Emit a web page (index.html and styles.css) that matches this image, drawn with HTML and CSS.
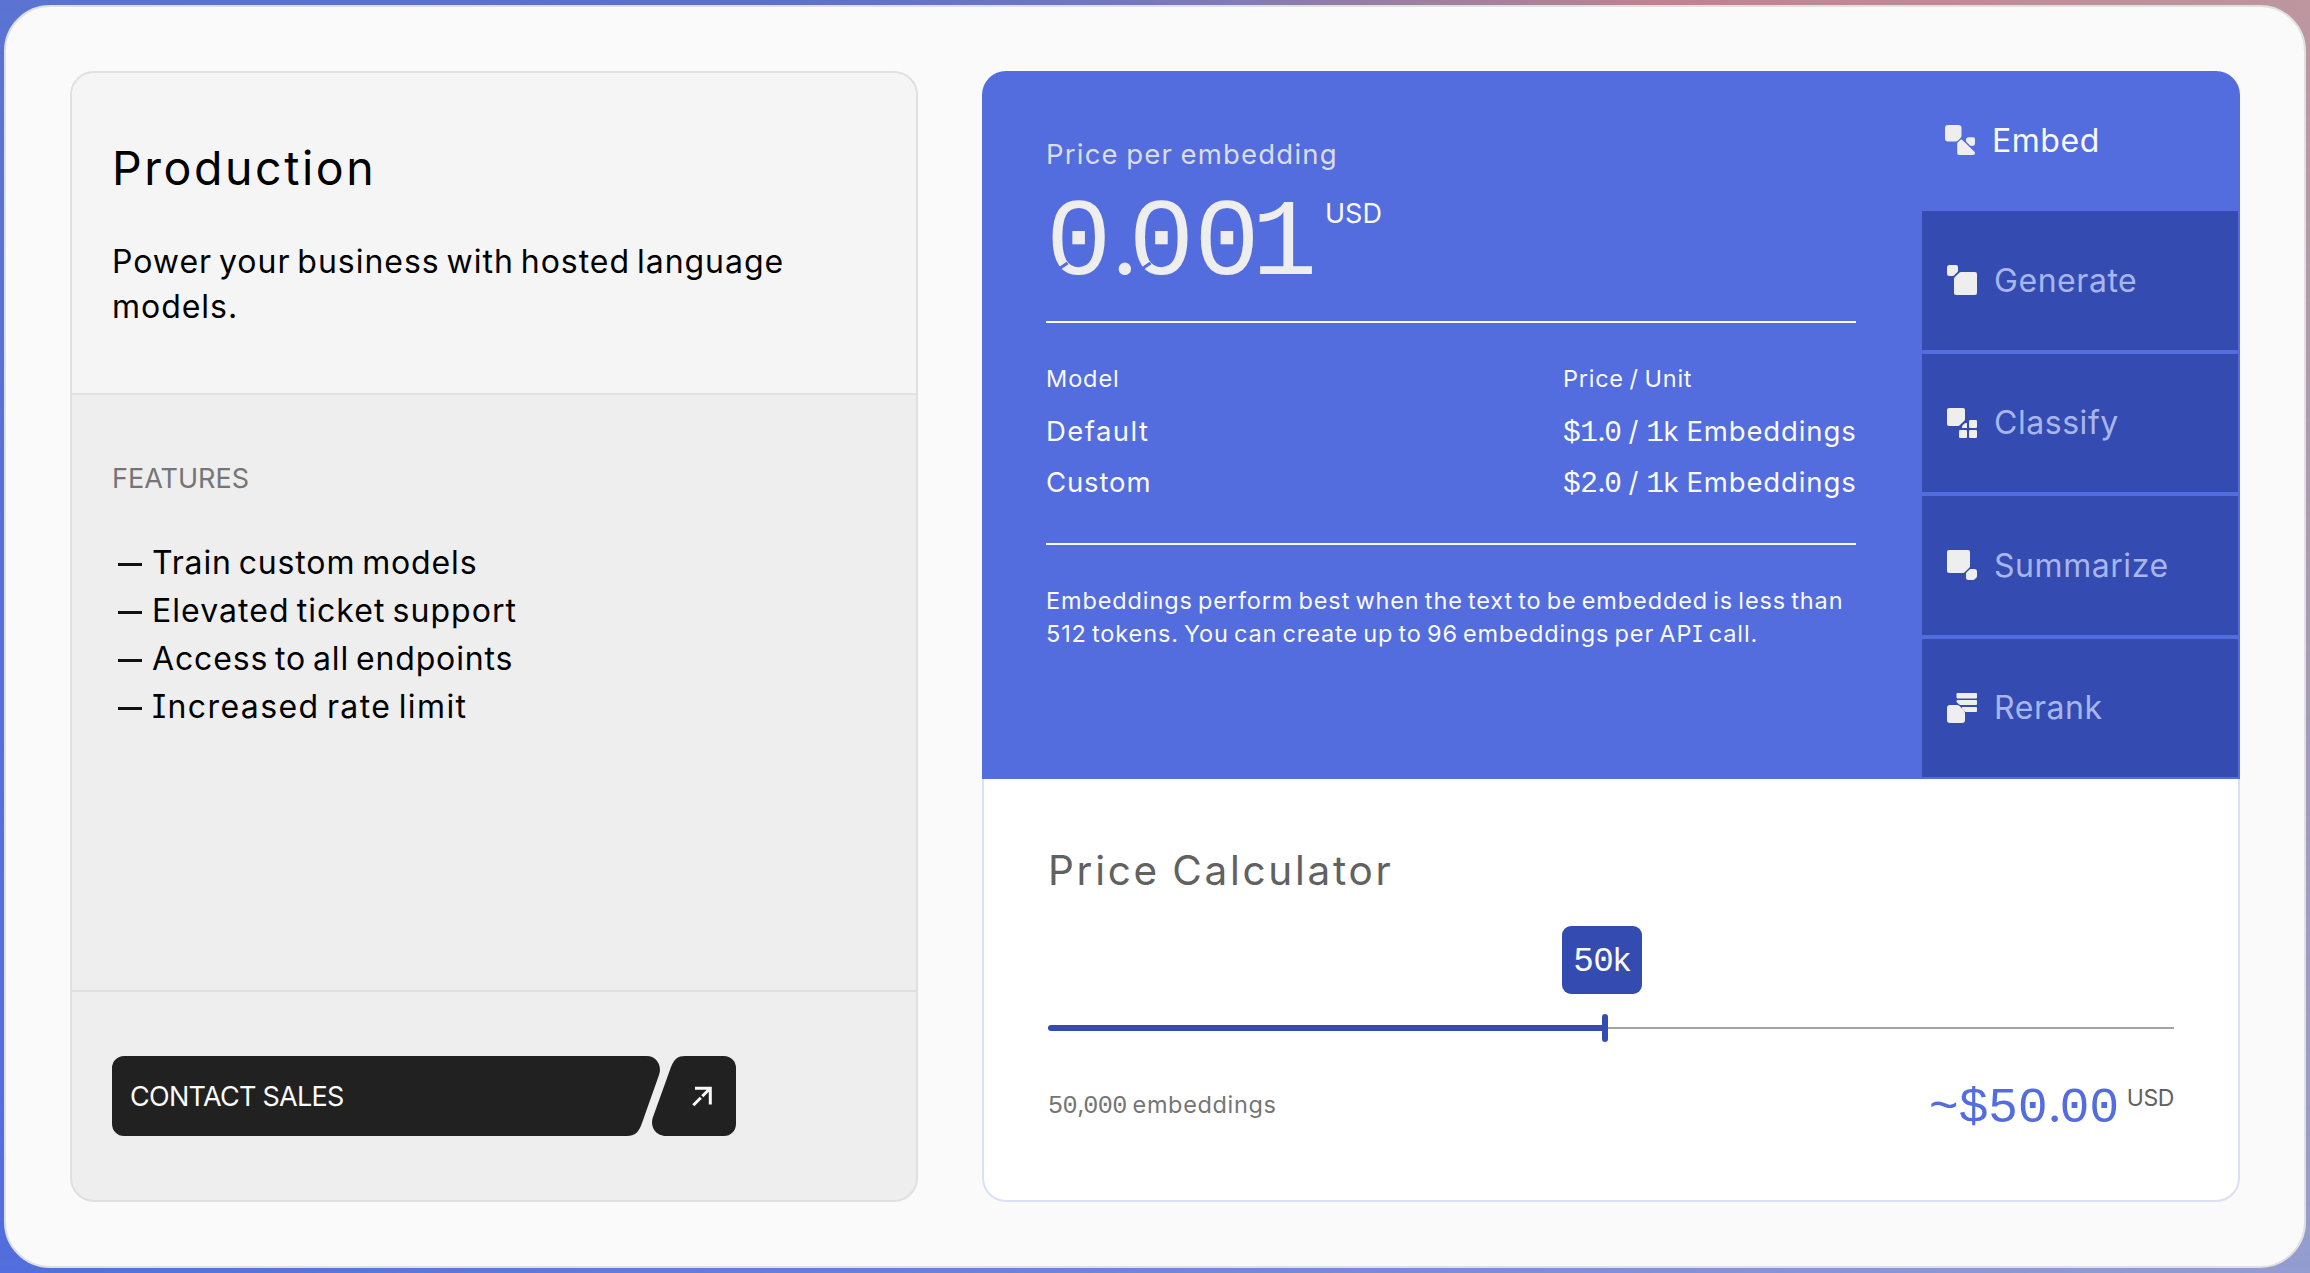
FILE: index.html
```html
<!DOCTYPE html>
<html lang="en">
<head>
<meta charset="utf-8">
<title>Pricing</title>
<link rel="stylesheet" href="styles.css">
</head>
<body>
<main class="panel">
  <section class="plan">
    <header class="plan-head">
      <h1 class="plan-title">Production</h1>
      <p class="plan-text">Power your business with hosted language models.</p>
    </header>
    <div class="plan-body">
      <h2 class="plan-label">FEATURES</h2>
      <ul class="features">
        <li class="feature"><span class="feature-text">Train custom models</span></li>
        <li class="feature"><span class="feature-text elevated">Elevated ticket support</span></li>
        <li class="feature"><span class="feature-text">Access to all endpoints</span></li>
        <li class="feature"><span class="feature-text increased">Increased rate limit</span></li>
      </ul>
    </div>
    <footer class="plan-foot">
      <a class="cta">
        <svg class="cta-shape" viewBox="0 0 624 80" width="624" height="80">
          <path fill="#212121" d="M12 0H535C544 0 550.500 9 547 19L530 67C527 76 523 80 515 80H12A12 12 0 0 1 0 68V12A12 12 0 0 1 12 0Z"/>
          <path fill="#212121" d="M573 0H612A12 12 0 0 1 624 12V68A12 12 0 0 1 612 80H554C544 80 537.500 71 541 61L559 11C562 3 566 0 573 0Z"/>
          <path fill="none" stroke="#fafafa" stroke-width="3" d="M583 32.300H598.300V48.500M598 32.500L590.300 40.300M588.800 41.800L581.300 49.300"/>
        </svg>
        <span class="cta-text">CONTACT SALES</span>
      </a>
    </footer>
  </section>

  <section class="pricing">
    <div class="pricing-top">
      <div class="price">
        <p class="price-label">Price per embedding</p>
        <div class="price-row">
          <span class="price-value"><span class="cut">0</span><span class="point">.</span><span class="cut">0</span><span class="tight">0</span>1</span>
          <span class="price-unit">USD</span>
        </div>
        <hr class="rule">
        <div class="models">
          <span class="models-head">Model</span><span class="models-head unit-head">Price / Unit</span>
          <span class="models-cell default">Default</span><span class="models-cell"><span class="num">$1<i class="dot">.</i>0</span> / <span class="num">1</span>k Embeddings</span>
          <span class="models-cell">Custom</span><span class="models-cell"><span class="num">$2<i class="dot">.</i>0</span> / <span class="num">1</span>k Embeddings</span>
        </div>
        <hr class="rule">
        <p class="note">Embeddings perform best when the text to be embedded is less than<br>512 tokens. You can create up to 96 embeddings per API call.</p>
      </div>
      <nav class="tabs">
        <a class="tab tab-active">
          <svg class="icon" viewBox="0 0 30 30"><path d="M3 0H13.500Q16.500 0 16.500 3V10.500Q16.500 12 15.500 13L13 15.500Q12 16.500 10.500 16.500H3Q0 16.500 0 13.500V3Q0 0 3 0Z"/><path d="M12.200 19Q12.200 18 13 17.200L15 15.200Q16.300 14 17.600 15.200L29.500 26.800Q30 27.500 30 28.300Q30 30 28 30H14Q12.200 30 12.200 28Z"/><path d="M23.500 12.200H28Q30 12.200 30 14.200V18Q30 21 27 21Q25.500 21 24.500 20L21.500 17Q20.500 15.500 21 14Q21.700 12.200 23.500 12.200Z"/></svg>
          <span class="tab-text">Embed</span>
        </a>
        <a class="tab">
          <svg class="icon" viewBox="0 0 30 30"><path d="M2.500 0H9Q11 0 11 2V5.500Q11 6.500 10.300 7.200L7.200 10.300Q6.500 11 5.500 11H2.500Q0 11 0 8.500V2.500Q0 0 2.500 0Z"/><path d="M14 7H28Q30 7 30 9V28Q30 30 28 30H9Q7 30 7 28V14Q7 13 7.700 12.300L12.300 7.700Q13 7 14 7Z"/></svg>
          <span class="tab-text">Generate</span>
        </a>
        <a class="tab">
          <svg class="icon" viewBox="0 0 30 30"><path d="M2 0H16Q18 0 18 2V11Q18 12 17.300 12.700L12.700 17.300Q12 18 11 18H2Q0 18 0 16V2Q0 0 2 0Z"/><rect x="22" y="12" width="8" height="8" rx="1.300"/><rect x="12" y="22" width="8" height="8" rx="1.300"/><rect x="22" y="22" width="8" height="8" rx="1.300"/><path d="M19 15H20V20H15V19Q15 18 15.700 17.300L17.300 15.700Q18 15 19 15Z"/></svg>
          <span class="tab-text">Classify</span>
        </a>
        <a class="tab">
          <svg class="icon" viewBox="0 0 30 30"><path d="M2 0H21Q23 0 23 2V16Q23 17 22.300 17.700L17.700 22.300Q17 23 16 23H2Q0 23 0 21V2Q0 0 2 0Z"/><path d="M24 19H27.500Q30 19 30 21.500V26Q30 27 29.300 27.700L27.700 29.300Q27 30 26 30H21.500Q19 30 19 27.500V24Q19 23 19.700 22.300L22.300 19.700Q23 19 24 19Z"/></svg>
          <span class="tab-text">Summarize</span>
        </a>
        <a class="tab">
          <svg class="icon" viewBox="0 0 30 30"><path d="M10.500 0H29Q30 0 30 1V4.500Q30 5.500 29 5.500H10.500Q9.500 5.500 9.500 4.500V1Q9.500 0 10.500 0Z"/><path d="M10.500 7H29Q30 7 30 8V11Q30 12 29 12H14Q13 12 12.300 11.500L10 9.500Q9.500 9 9.500 8Q9.500 7 10.500 7Z"/><path d="M15.500 14H29Q30 14 30 15V18Q30 19 29 19H19.500Q18.500 19 18 18.500L15 15.500Q14.300 14 15.500 14Z"/><path d="M3 12H10Q11.500 12 12.500 13L17 17.500Q18 18.500 18 20V27Q18 30 15 30H3Q0 30 0 27V15Q0 12 3 12Z"/></svg>
          <span class="tab-text">Rerank</span>
        </a>
      </nav>
    </div>

    <div class="calc">
      <h2 class="calc-title">Price Calculator</h2>
      <div class="slider">
        <span class="slider-track"></span>
        <span class="slider-fill"></span>
        <span class="slider-handle"></span>
        <span class="slider-badge"><span class="num">50</span>k</span>
      </div>
      <div class="calc-foot">
        <span class="calc-count"><span class="num">50<i class="dot">,</i>000</span> embeddings</span>
        <span class="calc-total">~$50<i class="dot">.</i>00</span>
        <span class="calc-unit">USD</span>
      </div>
    </div>
  </section>
</main>
</body>
</html>
```
FILE: styles.css
```css
* { box-sizing: border-box; margin: 0; padding: 0; }

body {
  position: relative;
  height: 1273px;
  padding: 5px 4px;
  overflow: hidden;
  font-family: Inter, "Liberation Sans", sans-serif;
  font-weight: 400;
  font-feature-settings: "cv08";
  word-spacing: -1.6px;
  background: linear-gradient(90deg, #536edd 0%, #6a80db 40%, #8493d6 75%, #949dd0 100%);
}

body::before {
  content: "";
  position: absolute;
  inset: 0;
  background: linear-gradient(90deg, #5b73d2 0%, #5c70cb 33%, #7078bd 48%, #a07f9f 62%, #bb8590 72%, #bd969f 100%);
  -webkit-mask-image: linear-gradient(#000, transparent);
  mask-image: linear-gradient(#000, transparent);
}

.panel {
  position: relative;
  display: flex;
  gap: 64px;
  height: 1263px;
  padding: 64px;
  border: 2px solid #e0e0e0;
  border-radius: 46px;
  background: #fafafa;
}

.plan {
  display: flex;
  flex-direction: column;
  width: 848px;
  height: 1131px;
  border: 2px solid #e0e0e0;
  border-radius: 24px;
  overflow: hidden;
  background: #eee;
}
.plan-head {
  height: 322px;
  padding: 68px 80px 0 40px;
  border-bottom: 2px solid #e0e0e0;
  background: #f5f5f5;
}
.plan-title { font-size: 46.5px; line-height: 54px; font-weight: 400; letter-spacing: 2.55px; }
.plan-text { margin-top: 44px; font-size: 32px; line-height: 45px; word-spacing: -3px; letter-spacing: .97px; }
.plan-body {
  height: 597px;
  padding: 68px 40px 0;
  border-bottom: 2px solid #e0e0e0;
}
.plan-label { font-size: 27px; line-height: 32px; font-weight: 400; letter-spacing: 0; color: #757575; }
.features { margin-top: 44px; list-style: none; }
.feature { display: flex; align-items: center; gap: 10px; font-size: 32px; line-height: 48px; padding-left: 6px; word-spacing: -3px; }
.feature::before { content: ""; width: 24px; height: 3px; margin-top: 2px; background: #111; }
.feature-text { letter-spacing: .86px; }
.elevated { letter-spacing: 1.05px; }
.increased { letter-spacing: 1.4px; }
.plan-foot { padding: 64px 40px 0; }
.cta { position: relative; display: flex; align-items: center; width: 624px; height: 80px; }
.cta-shape { position: absolute; left: 0; top: 0; }
.cta-text { position: relative; padding-left: 18px; font-size: 27px; word-spacing: 0; letter-spacing: -.73px; color: #fafafa; }

.pricing { display: flex; flex-direction: column; width: 1258px; height: 1131px; }
.pricing-top {
  display: flex;
  height: 708px;
  border-radius: 24px 24px 0 0;
  background: #536ddf;
  color: #fafafa;
}
.price { width: 940px; padding: 67px 66px 0 64px; }
.price-label { font-size: 27.5px; line-height: 32px; letter-spacing: 1.22px; color: #dcdde3; }
.price-row { display: flex; align-items: flex-start; margin-top: 20px; }
.price-value {
  width: 279px;
  font-family: "Liberation Mono", monospace;
  font-size: 109px;
  line-height: 110px;
  white-space: nowrap;
  color: #eee;
}
.point { font-family: Inter, sans-serif; font-size: .85em; line-height: 1; letter-spacing: -.1em; }
.tight { letter-spacing: -8px; }
.cut { position: relative; }
.cut::after {
  content: "";
  position: absolute;
  left: 7px;
  top: 83px;
  width: 16px;
  height: 3px;
  background: #536ddf;
  transform: rotate(-35deg);
}
.price-unit { margin-top: 8px; font-size: 27px; line-height: 32px; }
.rule { width: 810px; height: 2px; margin: 21px 0 0; border: 0; background: #fafafa; }
.models { display: grid; grid-template-columns: 517px auto; margin-top: 42px; }
.models-head { margin-bottom: 13px; font-size: 23.5px; line-height: 28px; letter-spacing: .9px; }
.unit-head { letter-spacing: .75px; }
.models-cell { font-size: 27.5px; line-height: 51px; letter-spacing: .87px; white-space: nowrap; }
.default { letter-spacing: 1.45px; }
.models + .rule { margin-top: 35px; }
.note { margin-top: 39px; font-size: 23.5px; line-height: 33px; word-spacing: -2.3px; letter-spacing: .88px; white-space: nowrap; }

.num { font-family: "Liberation Mono", monospace; font-size: 1.07em; line-height: 1; letter-spacing: -.5px; }
.dot { font-family: Inter, sans-serif; font-style: normal; line-height: 1; letter-spacing: -.05em; }

.tabs { display: flex; flex-direction: column; gap: 4px; width: 318px; padding: 0 2px 2px 0; }
.tab {
  flex: 1;
  display: flex;
  align-items: center;
  gap: 17px;
  padding-left: 25px;
  background: #344cb1;
  color: #a9b6ee;
}
.tab-active { flex: 0 0 140px; margin-bottom: -4px; padding: 0 0 2px 23px; background: none; color: #fafafa; }
.icon { width: 30px; height: 30px; fill: #eee; }
.tab-text { font-size: 32px; letter-spacing: .55px; }

.calc {
  flex: 1;
  padding: 68px 64px 0;
  border: 2px solid #dce0f4;
  border-top: 0;
  border-radius: 0 0 24px 24px;
  background: #fff;
}
.calc-title { font-size: 40.5px; line-height: 48px; font-weight: 400; letter-spacing: 2.7px; color: #616161; }
.slider { position: relative; height: 116px; margin-top: 31px; }
.slider-track { position: absolute; left: 0; right: 0; top: 101px; height: 2px; background: #9ea5a3; }
.slider-fill { position: absolute; left: 0; top: 99px; width: 557px; height: 6px; border-radius: 3px; background: #344cb1; }
.slider-handle { position: absolute; left: 554px; top: 88px; width: 6px; height: 28px; border-radius: 3px; background: #344cb1; }
.slider-badge {
  position: absolute;
  left: 514px;
  top: 0;
  width: 80px;
  height: 68px;
  border-radius: 9px;
  background: #344cb1;
  color: #fafafa;
  font-size: 32px;
  line-height: 68px;
  text-align: center;
}
.calc-foot { display: flex; align-items: flex-start; margin-top: 37px; }
.calc-count { margin: 12px auto 0 0; font-size: 23.5px; line-height: 28px; letter-spacing: .65px; color: #757575; }
.calc-total { font-family: "Liberation Mono", monospace; font-size: 50px; line-height: 60px; letter-spacing: -.3px; color: #536ddf; }
.calc-unit { margin: 5px 0 0 8px; font-size: 23px; line-height: 28px; letter-spacing: -.44px; color: #616161; }
```
